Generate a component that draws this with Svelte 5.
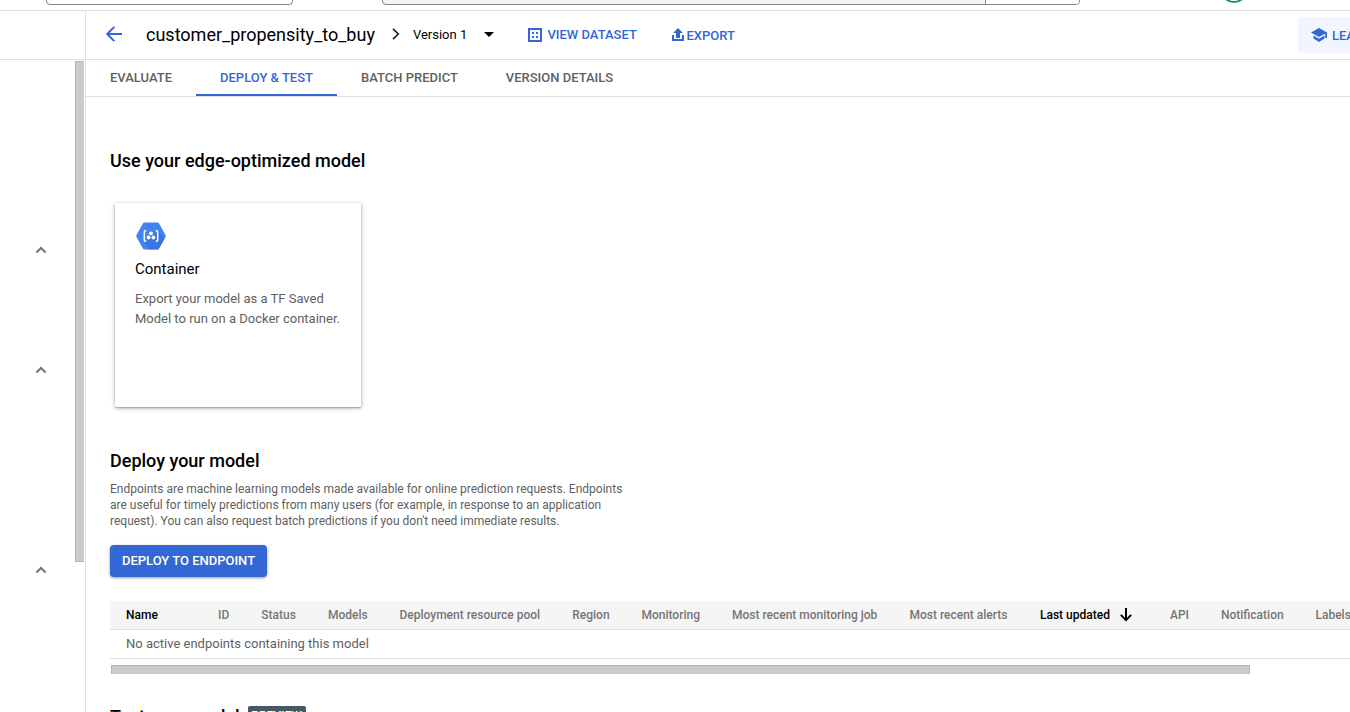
<script>
  const tabs = [
    { label: 'EVALUATE', width: 110 },
    { label: 'DEPLOY & TEST', width: 141, active: true },
    { label: 'BATCH PREDICT', width: 145 },
    { label: 'VERSION DETAILS', width: 155 }
  ];
  const columns = [
    { label: 'Name', width: 92, strong: true },
    { label: 'ID', width: 43.3 },
    { label: 'Status', width: 66.7 },
    { label: 'Models', width: 71.5 },
    { label: 'Deployment resource pool', width: 172.8 },
    { label: 'Region', width: 69.2 },
    { label: 'Monitoring', width: 90.5 },
    { label: 'Most recent monitoring job', width: 177.5 },
    { label: 'Most recent alerts', width: 130.5 },
    { label: 'Last updated', width: 130, strong: true, sorted: true },
    { label: 'API', width: 51 },
    { label: 'Notification', width: 94.5 },
    { label: 'Labels', width: 80 }
  ];
  const chevronGaps = [0, 112, 192];
</script>

<div class="app">
  <div class="topbar">
    <div class="project"></div>
    <div class="search"><div class="search-button"></div></div>
    <div class="avatar"></div>
  </div>

  <div class="body">
    <aside>
      <div class="side-head"></div>
      <div class="side-body">
        <div class="chevrons">
          {#each chevronGaps as gap}
            <svg style="margin-top:{gap}px" width="12" height="8" viewBox="0 0 12 8"><path d="M1.400 6.500 6 2l4.600 4.500" fill="none" stroke="#757575" stroke-width="2" /></svg>
          {/each}
        </div>
        <div class="vscroll"></div>
      </div>
    </aside>

    <main>
      <header>
        <svg class="back" width="16" height="16" viewBox="0 0 16 16"><path d="M16 8H1.500M8.300.9 1.200 8l7.100 7.100" fill="none" stroke="#3367d6" stroke-width="2" /></svg>
        <h1>customer_propensity_to_buy</h1>
        <svg class="crumb" width="8" height="12" viewBox="0 0 8 12"><path d="M1 .8 6.300 6 1 11.200" fill="none" stroke="#212121" stroke-width="1.700" /></svg>
        <span class="version">Version 1</span>
        <svg class="caret" width="10" height="5" viewBox="0 0 10 5"><path d="M0 0h10L5 5z" /></svg>
        <svg class="grid-icon" width="14" height="14" viewBox="0 0 14 14" fill="#3367d6"><path fill-rule="evenodd" d="M0 0h14v14H0zM2 2v10h10V2z" /><path d="M4 4h2v2H4zM8 4h2v2H8zM4 8h2v2H4zM8 8h2v2H8z" /></svg>
        <span class="action view">VIEW DATASET</span>
        <svg class="export-icon" width="12" height="13" viewBox="0 0 12 13" fill="#3367d6"><path d="M6 0 11 5H8v5H4V5H1zM0 7h2v4h8V7h2v6H0z" /></svg>
        <span class="action export">EXPORT</span>
        <div class="learn">
          <svg width="16" height="14" viewBox="0 0 16 14" fill="#3367d6"><path d="M8 0 0 4.500 8 9l6.200-3.500V10H16V4.500zM2.500 7.500v3L8 14l5.500-3.500v-3L8 10.700z" /></svg>
          <span>LEARN</span>
        </div>
      </header>

      <nav>
        {#each tabs as tab}
          <div class="tab" class:active={tab.active} style="width:{tab.width}px">{tab.label}</div>
        {/each}
      </nav>

      <section class="content">
        <h2>Use your edge-optimized model</h2>
        <div class="card">
          <svg width="30" height="28" viewBox="0 0 30 28">
            <path d="M8.400.5h13.200q1 0 1.500.9l6.400 11.700q.5.900 0 1.800l-6.400 11.700q-.5.900-1.500.9H8.400q-1 0-1.500-.9L.5 14.900q-.5-.9 0-1.800L6.900 1.400Q7.400.5 8.400.5z" fill="#4284f3" />
            <path d="M22.300 9 28.700 16.500 23 26.600q-.5.900-1.500.9h-9L8 19z" fill="#3871dc" opacity=".75" />
            <path d="M10.300 8.700H9.500q-1.200 0-1.200 1.200v8.200q0 1.200 1.200 1.200h.8M19.700 8.700h.8q1.200 0 1.200 1.200v8.200q0 1.200-1.200 1.200h-.8" fill="none" stroke="#fff" stroke-width="1.500" />
            <g fill="#fff"><circle cx="15" cy="11.300" r="1.900" /><circle cx="12.600" cy="15.500" r="1.900" /><circle cx="17.400" cy="15.500" r="1.900" /></g>
          </svg>
          <h3>Container</h3>
          <p>Export your model as a TF Saved<br />Model to run on a Docker container.</p>
        </div>

        <h2 class="deploy-title">Deploy your model</h2>
        <p class="about">Endpoints are machine learning models made available for online prediction requests. Endpoints<br />are useful for timely predictions from many users (for example, in response to an application<br />request). You can also request batch predictions if you don't need immediate results.</p>
        <button>DEPLOY TO ENDPOINT</button>

        <div class="table">
          <div class="thead">
            {#each columns as col}
              <div class="th" class:strong={col.strong} style="width:{col.width}px">
                <span>{col.label}</span>
                {#if col.sorted}
                  <svg width="12" height="14" viewBox="0 0 12 14"><path d="M6 0v12M.8 6.900 6 12.100l5.200-5.200" fill="none" stroke="#000" stroke-width="2" /></svg>
                {/if}
              </div>
            {/each}
          </div>
          <div class="empty">No active endpoints containing this model</div>
        </div>
        <div class="hscroll"></div>

        <div class="test-row">
          <h2>Test your model</h2>
          <span class="preview">PREVIEW</span>
        </div>
      </section>
    </main>
  </div>
</div>

<style>
  :global(body) { margin: 0; overflow: hidden; }
  * { box-sizing: border-box; }
  h1, h2, h3, p { margin: 0; }
  svg { display: block; flex: none; }
  .app {
    width: 1350px; height: 712px; overflow: hidden; background: #fff;
    font-family: Roboto, sans-serif; color: #000;
    display: flex; flex-direction: column;
  }
  .topbar { height: 11px; flex: none; border-bottom: 1px solid #dadce0; display: flex; align-items: flex-end; overflow: hidden; padding-left: 46px; }
  .project { width: 247px; height: 30px; border: 1px solid #80868b; border-radius: 4px; margin-bottom: 5px; flex: none; }
  .search { width: 698px; height: 30px; margin: 0 0 5px 89px; border: 1px solid #80868b; border-radius: 4px; background: #f1f3f4; display: flex; justify-content: flex-end; overflow: hidden; flex: none; }
  .search-button { width: 94px; border-left: 1px solid #80868b; background: #fff; }
  .avatar { width: 28px; height: 28px; border: 2px solid #0f9d58; border-radius: 50%; margin: 0 0 7px 140px; flex: none; }
  .body { flex: 1; display: flex; min-height: 0; }
  aside { width: 86px; flex: none; border-right: 1px solid #e0e0e0; }
  .side-head { height: 49px; border-bottom: 1px solid #e0e0e0; }
  .side-body { display: flex; justify-content: space-between; padding: 1px 1px 0 35px; }
  .chevrons { padding-top: 185px; }
  .vscroll { width: 9px; height: 501px; background: #cbcbcb; border: 1px solid #b5b5b5; border-right: 0; }
  main { flex: 1; min-width: 0; overflow: hidden; }
  header { height: 49px; border-bottom: 1px solid #e0e0e0; display: flex; align-items: center; padding-left: 20px; overflow: hidden; white-space: nowrap; }
  .back { margin-top: -2px; }
  h1 { font-size: 18px; font-weight: 400; line-height: 24px; width: 229px; margin-left: 24px; }
  .crumb { margin: -2px 0 0 17px; }
  .version { font-size: 13px; width: 54px; margin: -1px 0 0 13px; }
  .caret { margin: -1px 0 0 17px; }
  .grid-icon { margin-left: 34px; }
  .action, .learn { font-size: 13px; font-weight: 500; color: #3367d6; }
  .view { width: 90px; margin: -1px 0 0 5.500px; }
  .export-icon { margin: -1px 0 0 35.500px; }
  .export { width: 49px; margin: 1px 0 0 2px; }
  .learn { width: 90px; height: 36px; margin-left: 563px; flex: none; background: #f0f5ff; border-radius: 4px; display: flex; align-items: center; padding-left: 13px; gap: 5px; }
  .learn span { padding-top: 1px; }
  nav { height: 37px; border-bottom: 1px solid #e0e0e0; display: flex; }
  .tab { height: 36px; line-height: 36px; font-size: 13px; font-weight: 500; color: #616161; text-align: center; white-space: nowrap; flex: none; }
  .tab.active { color: #3367d6; border-bottom: 2px solid #3367d6; }
  .content { padding: 52px 0 0 24px; }
  h2 { font-size: 18px; font-weight: 500; line-height: 24px; white-space: nowrap; }
  .card { width: 246px; height: 204px; margin: 30px 0 0 5px; padding: 19px 20px 0; box-shadow: 0 1px 4px rgba(0,0,0,.35), 0 1px 1px rgba(0,0,0,.15); }
  .card svg { margin-left: 1px; }
  h3 { font-size: 15px; font-weight: 400; line-height: 20px; margin-top: 9px; }
  .card p { font-size: 13px; line-height: 20px; color: #616161; margin-top: 10px; white-space: nowrap; }
  .deploy-title { margin-top: 42px; }
  .about { font-size: 12px; line-height: 16px; color: #616161; margin-top: 8px; white-space: nowrap; }
  button { display: block; width: 157px; height: 32px; margin-top: 16px; padding: 0 0 2px; border: 0; border-radius: 4px; background: #3367d6; color: #fff; font: 500 13px Roboto, sans-serif; box-shadow: 0 1px 3px rgba(0,0,0,.4); white-space: nowrap; }
  .table { margin-top: 24px; width: 1300px; }
  .thead { height: 29px; background: #f5f5f5; border-bottom: 1px solid #e0e0e0; display: flex; padding-left: 16px; }
  .th { display: flex; align-items: center; flex: none; gap: 10px; font-size: 12px; font-weight: 500; color: #757575; white-space: nowrap; }
  .th.strong { color: #000; }
  .empty { height: 29px; line-height: 28px; padding-left: 16px; border-bottom: 1px solid #e0e0e0; font-size: 13px; color: #616161; }
  .hscroll { width: 1139px; height: 9px; margin: 6px 0 0 1px; background: #cbcbcb; border: 1px solid #b5b5b5; border-bottom: 0; }
  .test-row { display: flex; align-items: flex-start; margin-top: 31px; }
  .preview { margin: 1px 0 0 8px; width: 58px; height: 16px; line-height: 20px; border-radius: 2px; background: #455a64; color: #fff; font-size: 12px; font-weight: 500; text-align: center; }
</style>
